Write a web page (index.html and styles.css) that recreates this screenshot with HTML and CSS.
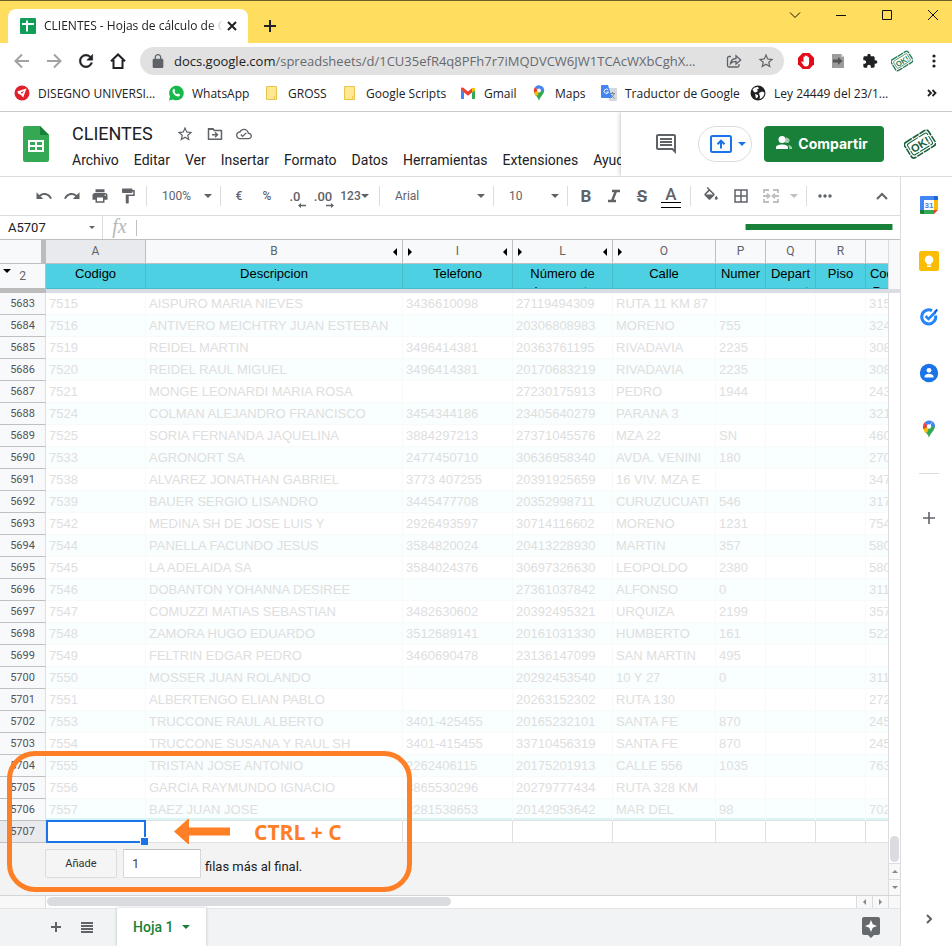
FILE: index.html
```html
<!DOCTYPE html>
<html lang="es">
<head>
<meta charset="utf-8">
<meta name="viewport" content="width=device-width, initial-scale=1">
<title>CLIENTES - Hojas de cálculo de Google</title>
<link rel="stylesheet" href="styles.css">
</head>
<body>
<header class="browser">
  <div class="tabstrip">
    <div class="tab">
      <svg class="i16" viewBox="0 0 16 16"><rect width="16" height="16" rx="1" fill="#0f9d58"/><path d="M2 6h12M7 2.500v11" stroke="#fff" stroke-width="2" fill="none"/></svg>
      <span class="tab-title">CLIENTES - Hojas de cálculo de Google</span>
      <button class="bare" aria-label="Cerrar pestaña"><svg width="10" height="10" viewBox="0 0 10 10"><path d="M1 1l8 8M9 1l-8 8" stroke="#202124" stroke-width="2"/></svg></button>
    </div>
    <button class="bare new-tab" aria-label="Nueva pestaña"><svg width="12" height="12" viewBox="0 0 12 12"><path d="M6 0v12M0 6h12" stroke="#202124" stroke-width="2"/></svg></button>
    <div class="window-controls">
      <button class="bare" aria-label="Buscar pestañas"><svg class="i16" viewBox="0 0 16 16"><path d="M3 5.500l5 5 5-5" stroke="#111" fill="none"/></svg></button>
      <button class="bare" aria-label="Minimizar"><svg class="i16" viewBox="0 0 16 16"><path d="M3 8.500h10" stroke="#111"/></svg></button>
      <button class="bare" aria-label="Maximizar"><svg class="i16" viewBox="0 0 16 16"><path d="M3.500 3.500h9v9h-9z" stroke="#111" fill="none"/></svg></button>
      <button class="bare" aria-label="Cerrar"><svg class="i16" viewBox="0 0 16 16"><path d="M3 3l10 10M13 3L3 13" stroke="#111"/></svg></button>
    </div>
  </div>
  <div class="navbar">
    <button class="bare nav-btn" aria-label="Atrás"><svg class="i16" viewBox="0 0 16 16"><path d="M15 8H2M8 1.500L1.500 8 8 14.500" stroke="#a0a2a4" stroke-width="2" fill="none"/></svg></button>
    <button class="bare nav-btn" aria-label="Adelante"><svg class="i16" viewBox="0 0 16 16"><path d="M1 8h13M8 1.500L14.500 8 8 14.500" stroke="#a0a2a4" stroke-width="2" fill="none"/></svg></button>
    <button class="bare nav-btn" aria-label="Recargar"><svg width="20" height="20" viewBox="0 0 24 24" fill="#202124" stroke="#202124" stroke-width=".6"><path d="M17.650 6.350C16.200 4.900 14.210 4 12 4c-4.420 0-7.990 3.580-7.990 8s3.570 8 7.990 8c3.730 0 6.840-2.550 7.730-6h-2.080c-.820 2.330-3.040 4-5.650 4-3.310 0-6-2.690-6-6s2.690-6 6-6c1.660 0 3.140.690 4.220 1.780L13 11h7V4l-2.350 2.350z"/></svg></button>
    <button class="bare nav-btn" aria-label="Inicio"><svg class="i16" viewBox="0 0 16 16"><path d="M1 8.300L8 1.500l7 6.800M3.500 7v8h9V7" stroke="#202124" stroke-width="2" fill="none"/></svg></button>
    <div class="omnibox">
      <svg class="lock" width="12" height="14" viewBox="4 1 16 21" fill="#5f6368"><path d="M18 8h-1V6c0-2.760-2.240-5-5-5S7 3.240 7 6v2H6c-1.100 0-2 .9-2 2v10c0 1.100.9 2 2 2h12c1.100 0 2-.9 2-2V10c0-1.100-.9-2-2-2zM9 6c0-1.660 1.340-3 3-3s3 1.340 3 3v2H9V6z"/></svg>
      <span class="url">docs.google.com<span class="path">/spreadsheets/d/1CU35efR4q8PFh7r7iMQDVCW6JW1TCAcWXbCghX...</span></span>
      <button class="bare" aria-label="Compartir página"><svg class="i16" viewBox="0 0 16 16" fill="none" stroke="#5f6368" stroke-width="1.300"><path d="M5 3.500H3a1.500 1.500 0 0 0-1.500 1.500v7.500A1.500 1.500 0 0 0 3 14h8.500a1.500 1.500 0 0 0 1.500-1.500V11"/><path d="M4.500 10.500C5 7 7 5.600 10 5.500V2.800L14.700 7 10 11V8.300c-2.500 0-4 .4-5.500 2.200z"/></svg></button>
      <button class="bare" aria-label="Marcador"><svg class="i18" viewBox="0 0 24 24" fill="#5f6368"><path d="M22 9.240l-7.190-.620L12 2 9.190 8.630 2 9.240l5.460 4.730L5.820 21 12 17.270 18.180 21l-1.630-7.030L22 9.240zM12 15.400l-3.760 2.270 1-4.280-3.320-2.880 4.380-.380L12 6.100l1.710 4.040 4.380.380-3.320 2.880 1 4.280L12 15.400z"/></svg></button>
    </div>
    <button class="bare nav-btn" aria-label="Bloqueador"><svg class="i16" viewBox="0 0 16 16"><path d="M4.700 0h6.600L16 4.700v6.600L11.300 16H4.700L0 11.300V4.700z" fill="#e30b17"/><path d="M4.200 8.500l1.300.8V4.200a.7.7 0 0 1 1.400 0v3V3.100a.7.7 0 0 1 1.400 0v4V3.500a.7.7 0 0 1 1.400 0v4V4.800a.7.7 0 0 1 1.400 0v5c0 2.200-1 3.700-3.100 3.700-1.500 0-2.500-.7-3.200-2.200L3.300 9.200c-.2-.6.4-1 .9-.7z" fill="#fff"/></svg></button>
    <button class="bare nav-btn" aria-label="Extensión"><svg width="12" height="14" viewBox="0 0 12 14"><path d="M0 0h9l3 3v11H0z" fill="#9c9c9c"/><path d="M9 0l3 3H9z" fill="#ccc"/><path d="M1 5.500h5V3l4.500 4L6 11V8.500H1z" fill="#555"/></svg></button>
    <button class="bare nav-btn" aria-label="Extensiones"><svg width="16" height="16" viewBox="0 0 24 24" fill="#202124"><path d="M20.500 11H19V7c0-1.100-.9-2-2-2h-4V3.500C13 2.120 11.880 1 10.500 1S8 2.120 8 3.500V5H4c-1.100 0-1.990.9-1.990 2v3.800H3.500c1.490 0 2.700 1.210 2.700 2.700s-1.210 2.700-2.700 2.700H2V20c0 1.100.9 2 2 2h3.800v-1.500c0-1.490 1.210-2.700 2.700-2.700s2.700 1.210 2.700 2.700V22H17c1.100 0 2-.9 2-2v-4h1.500c1.380 0 2.500-1.120 2.500-2.500S21.880 11 20.500 11z"/></svg></button>
    <button class="bare nav-btn" aria-label="Perfil"><svg width="22" height="22" viewBox="0 0 32 32"><g transform="rotate(-32 16 16)" fill="none" stroke="#2b7a55"><rect x="1.500" y="7" width="29" height="18" rx="3" stroke-width="2" stroke-dasharray="9 1"/><rect x="4.500" y="10" width="23" height="12" rx="2"/><text x="16" y="20.500" class="stamp" fill="#2b7a55" stroke="none">OK!</text></g></svg></button>
    <button class="bare nav-btn" aria-label="Menú"><svg class="i16" viewBox="0 0 16 16" fill="#202124"><circle cx="8" cy="3" r="1.600"/><circle cx="8" cy="8" r="1.600"/><circle cx="8" cy="13" r="1.600"/></svg></button>
  </div>
  <nav class="bookmarks">
    <a href="#"><svg class="i16" viewBox="0 0 16 16"><circle cx="8" cy="8" r="7.500" fill="#e0202c"/><path d="M12.500 3.500L9.200 12.500 7 10 4 8.500l-.5-2.300z" fill="#fff"/><path d="M6.800 7.600l3.200-1.700-2 3z" fill="#e0202c"/></svg>DISEGNO UNIVERSI...</a>
    <a href="#"><svg class="i16" viewBox="0 0 16 16"><path d="M1 15.500l1-4A7.300 7.300 0 1 1 5 14.500z" fill="#16b94b"/><path d="M5.300 4.200c.5-.5 1-.4 1.200.1l.6 1.300c.2.500-.6 1-.5 1.300.5 1.100 1.300 1.900 2.500 2.400.4.100.8-.9 1.200-.7l1.400.7c.5.300.2 1.200-.2 1.600-1.300 1.100-3.500.4-5-1.100-1.500-1.400-2.700-3.900-1.200-5.600z" fill="#fff"/></svg>WhatsApp</a>
    <a href="#"><svg class="i16" viewBox="0 0 16 16"><path d="M2.500 1.500h10v13h-10z" fill="#ffe794" stroke="#e8c54a"/><path d="M10.500 14.500v-3l2-1v4z" fill="#ffefb4" stroke="#e8c54a"/></svg>GROSS</a>
    <a href="#"><svg class="i16" viewBox="0 0 16 16"><path d="M2.500 1.500h10v13h-10z" fill="#ffe794" stroke="#e8c54a"/><path d="M10.500 14.500v-3l2-1v4z" fill="#ffefb4" stroke="#e8c54a"/></svg>Google Scripts</a>
    <a href="#"><svg class="i16" viewBox="0 0 16 16"><path d="M1 14V5l3 2v7z" fill="#4285f4"/><path d="M15 14V5l-3 2v7z" fill="#34a853"/><path d="M1 5V4c0-1.500 1.600-1.800 2.600-1L8 6.500 12 3.300V7.600L8 10.700 4 7.500z" fill="#ea4335"/><path d="M12 3.300c1-1 3-.8 3 .8V5.300l-3 2.300z" fill="#fbbc04"/></svg>Gmail</a>
    <a href="#"><svg class="i16" viewBox="0 0 16 16"><path d="M8 16C7.500 12 2.800 9.700 2.800 5.400L13.200 5c0 4.700-4.700 7-5.200 11z" fill="#34a853"/><path d="M3 6.500L8 5l-1 5-2.500 1C3.800 9.500 3.200 8 3 6.500z" fill="#fbbc04"/><path d="M4 2L8 5.500 3.200 7.500C2.500 5.500 2.800 3.500 4 2z" fill="#ea4335"/><path d="M4 2a5.300 5.300 0 0 1 9.200 3.500L9 6.500z" fill="#4285f4"/><circle cx="8" cy="5.500" r="1.900" fill="#fff"/></svg>Maps</a>
    <a href="#"><svg class="i16" viewBox="0 0 16 16"><path d="M6 3h9a1 1 0 0 1 1 1v11a1 1 0 0 1-1 1H8z" fill="#d5d8dc"/><path d="M9 8.500h5M11.500 7v1.500M13 8.500c-.5 2-2 3.500-3.500 4.500M10 10l3.500 3.500" stroke="#7a8a95" fill="none"/><path d="M1 0h6l4 13H1a1 1 0 0 1-1-1V1a1 1 0 0 1 1-1z" fill="#4285f4"/><path d="M7.200 5A2.200 2.200 0 1 0 7.500 7H5.500" stroke="#fff" fill="none"/></svg>Traductor de Google</a>
    <a href="#"><svg class="i16" viewBox="0 0 16 16"><circle cx="8" cy="8" r="7.500" fill="#202124"/><path d="M2.500 4.500C4 2.500 6 1.800 8 2l1 1.500-2 1L8 6 5.500 7.500 4 7zM9 8l3-1.500 2.300 1c.2 3-2 6-4.800 6.400L10 12z" fill="#fff"/><path d="M5 9l3 1v2l-2 1.500" fill="#fff"/></svg>Ley 24449 del 23/1...</a>
    <button class="bare more" aria-label="Más marcadores"><svg width="10" height="8" viewBox="0 0 10 8"><path d="M1 1l3 3-3 3M5.500 1l3 3-3 3" stroke="#202124" stroke-width="1.800" fill="none"/></svg></button>
  </nav>
</header>

<section class="doc-head">
  <div class="doc-left">
    <svg class="logo" width="26" height="36" viewBox="0 0 26 36"><path d="M2 0h15l9 9v25a2 2 0 0 1-2 2H2a2 2 0 0 1-2-2V2a2 2 0 0 1 2-2z" fill="#34a853"/><path d="M17 0l9 9h-9z" fill="#188038"/><path d="M5 14h16v12H5zm2 2v3h5v-3zm7 0v3h5v-3zm-7 5v3h5v-3zm7 0v3h5v-3z" fill="#fff" fill-rule="evenodd"/></svg>
    <div class="doc-info">
      <div class="title-row">
        <input class="doc-title" aria-label="Nombre del documento" value="CLIENTES">
        <button class="bare" aria-label="Destacar"><svg class="i18" viewBox="0 0 24 24" fill="#5f6368"><path d="M22 9.240l-7.190-.620L12 2 9.190 8.630 2 9.240l5.460 4.730L5.820 21 12 17.270 18.180 21l-1.630-7.030L22 9.240zM12 15.400l-3.760 2.270 1-4.280-3.320-2.880 4.380-.380L12 6.100l1.710 4.040 4.380.380-3.320 2.880 1 4.280L12 15.400z"/></svg></button>
        <button class="bare" aria-label="Mover"><svg class="i16" viewBox="0 0 16 16"><path d="M1.500 2.800h4.300l1.500 1.700h7.200v8.700h-13z" stroke="#5f6368" stroke-width="1.500" fill="none" stroke-linejoin="round"/><path d="M1 2h5l1.500 2H1z" fill="#5f6368"/><path d="M5 8.800h5M8 6.300l2.500 2.500L8 11.300" stroke="#5f6368" stroke-width="1.400" fill="none"/></svg></button>
        <button class="bare" aria-label="Guardado"><svg class="i16" viewBox="0 0 24 24" fill="#5f6368"><path d="M19.350 10.040C18.670 6.590 15.640 4 12 4 9.110 4 6.600 5.640 5.350 8.040 2.340 8.360 0 10.910 0 14c0 3.310 2.690 6 6 6h13c2.760 0 5-2.240 5-5 0-2.640-2.050-4.780-4.650-4.960zM19 18H6c-2.210 0-4-1.790-4-4 0-2.050 1.530-3.760 3.560-3.970l1.070-.110.5-.950C8.080 7.140 9.940 6 12 6c2.620 0 4.880 1.860 5.390 4.430l.3 1.500 1.530.110c1.560.1 2.780 1.410 2.780 2.960 0 1.650-1.350 3-3 3zm-9-3.820l-2.090-2.090L6.500 13.500 10 17l6.010-6.010-1.410-1.410z"/></svg></button>
      </div>
      <nav class="menus">
        <button class="bare">Archivo</button><button class="bare">Editar</button><button class="bare">Ver</button><button class="bare">Insertar</button><button class="bare">Formato</button><button class="bare">Datos</button><button class="bare">Herramientas</button><button class="bare">Extensiones</button><button class="bare">Ayuda</button>
      </nav>
    </div>
  </div>
  <div class="doc-right">
    <button class="bare" aria-label="Comentarios"><svg class="i24" viewBox="0 0 24 24" fill="#5f6368"><path d="M21.990 4c0-1.100-.890-2-1.990-2H4c-1.100 0-2 .9-2 2v12c0 1.100.9 2 2 2h14l4 4-.010-18zM20 4v13.170L18.830 16H4V4h16zM6 12h12v2H6zm0-3h12v2H6zm0-3h12v2H6z"/></svg></button>
    <button class="present" aria-label="Presentar"><svg width="22" height="18" viewBox="0 0 22 18"><rect x="1" y="1" width="20" height="16" rx="1.500" stroke="#1a73e8" stroke-width="2" fill="none"/><path d="M11 13.500V6M7.500 9.200L11 5.700l3.500 3.500" stroke="#1a73e8" stroke-width="2" fill="none"/></svg><i class="caret blue"></i></button>
    <button class="share"><svg width="16" height="14" viewBox="0 0 16 14" fill="#fff"><circle cx="6" cy="3.500" r="3.500"/><path d="M0 13v-1.500C0 9.200 3.500 8.500 6 8.500s6 .7 6 3V13z"/><g opacity=".6"><path d="M9.500.6a3.400 3.400 0 0 1 0 5.900c1-2 1-4 0-5.900z"/><circle cx="11" cy="4.500" r="2.500"/><path d="M12 9c2 .3 4 1.200 4 2.700V13h-2.800v-1.700c0-1-.5-1.800-1.200-2.300z"/></g></svg>Compartir</button>
    <button class="bare avatar" aria-label="Cuenta"><svg width="32" height="32" viewBox="0 0 32 32"><g transform="rotate(-32 16 16)" fill="none" stroke="#17603b"><rect x="2" y="7" width="28" height="18" rx="3" stroke-width="1.600" stroke-dasharray="7 1"/><rect x="4.500" y="9.500" width="23" height="13" rx="2" stroke-dasharray="11 1"/><text x="16" y="20.500" class="stamp" fill="#17603b" stroke="none">OK!</text></g></svg></button>
  </div>
</section>

<main class="app">
  <div class="work">
    <div class="tools">
      <button class="bare tb" aria-label="Deshacer"><svg class="i18" viewBox="0 0 24 24"><path d="M12.500 8c-2.650 0-5.050.990-6.900 2.600L2 7v9h9l-3.620-3.620c1.390-1.160 3.160-1.880 5.120-1.880 3.540 0 6.550 2.310 7.600 5.500l2.370-.780C21.080 11.030 17.150 8 12.500 8z"/></svg></button>
      <button class="bare tb" aria-label="Rehacer"><svg class="i18" viewBox="0 0 24 24"><path d="M18.400 10.600C16.550 8.990 14.150 8 11.500 8c-4.650 0-8.580 3.030-9.960 7.220L3.900 16c1.050-3.190 4.050-5.500 7.600-5.500 1.950 0 3.730.720 5.120 1.880L13 16h9V7l-3.600 3.600z"/></svg></button>
      <button class="bare tb" aria-label="Imprimir"><svg class="i18" viewBox="0 0 24 24"><path d="M19 8H5c-1.660 0-3 1.340-3 3v6h4v4h12v-4h4v-6c0-1.660-1.340-3-3-3zm-3 11H8v-5h8v5zm3-7c-.550 0-1-.450-1-1s.450-1 1-1 1 .450 1 1-.450 1-1 1zm-1-9H6v4h12V3z"/></svg></button>
      <button class="bare tb" aria-label="Copiar formato"><svg class="i18" viewBox="0 0 24 24"><path d="M18 4V3c0-.550-.450-1-1-1H5c-.550 0-1 .450-1 1v4c0 .550.450 1 1 1h12c.550 0 1-.450 1-1V6h1v4H9v11c0 .550.450 1 1 1h2c.550 0 1-.450 1-1v-9h8V4h-3z"/></svg></button>
      <i class="sep"></i>
      <span class="pick"><select aria-label="Zoom"><option>100%</option></select><i class="caret"></i></span>
      <i class="sep"></i>
      <button class="bare tb">€</button>
      <button class="bare tb">%</button>
      <button class="bare tb dec" aria-label="Menos decimales">.0<svg width="8" height="5" viewBox="0 0 8 5"><path d="M3 0v1.700h5v1.600H3V5L0 2.500z"/></svg></button>
      <button class="bare tb dec" aria-label="Más decimales">.00<svg width="8" height="5" viewBox="0 0 8 5"><path d="M5 0v1.700H0v1.600h5V5l3-2.500z"/></svg></button>
      <button class="bare tb fmt">123<i class="caret"></i></button>
      <i class="sep"></i>
      <span class="pick font"><select aria-label="Fuente"><option>Arial</option></select><i class="caret"></i></span>
      <i class="sep"></i>
      <span class="pick"><select aria-label="Tamaño"><option>10</option></select><i class="caret"></i></span>
      <i class="sep"></i>
      <button class="bare tb letter">B</button>
      <button class="bare tb" aria-label="Cursiva"><svg width="14" height="14" viewBox="0 0 14 14"><path d="M5 2h8M1 12h8M9 2L5 12" stroke="#5f6368" stroke-width="2.400"/></svg></button>
      <button class="bare tb letter strike">S</button>
      <button class="bare tb letter color">A</button>
      <i class="sep"></i>
      <button class="bare tb fill" aria-label="Color de relleno"><svg class="i18" viewBox="0 0 24 24"><path d="M16.560 8.940L7.620 0 6.210 1.410l2.380 2.380-5.150 5.150c-.590.590-.590 1.540 0 2.120l5.500 5.500c.290.290.680.440 1.060.440s.770-.150 1.060-.440l5.500-5.500c.590-.580.590-1.530 0-2.120zM5.210 10L10 5.210 14.790 10H5.210zM19 11.500s-2 2.170-2 3.500c0 1.100.9 2 2 2s2-.9 2-2c0-1.330-2-3.500-2-3.500z"/></svg></button>
      <button class="bare tb" aria-label="Bordes"><svg class="i18" viewBox="0 0 24 24"><path d="M3 3v18h18V3H3zm8 16H5v-6h6v6zm0-8H5V5h6v6zm8 8h-6v-6h6v6zm0-8h-6V5h6v6z"/></svg></button>
      <button class="bare tb merge" disabled aria-label="Combinar celdas"><svg width="16" height="14" viewBox="0 0 16 14"><path d="M1 4V1h5M10 1h5v3M1 10v3h5M10 13h5v-3M0 7h6M16 7h-6M4 4.700L6.500 7 4 9.300M12 4.700L9.500 7l2.500 2.300" stroke="#bdbfc1" stroke-width="1.800" fill="none"/></svg><i class="caret"></i></button>
      <i class="sep"></i>
      <button class="bare tb" aria-label="Más"><svg width="14" height="4" viewBox="0 0 14 4"><circle cx="2" cy="2" r="1.700"/><circle cx="7" cy="2" r="1.700"/><circle cx="12" cy="2" r="1.700"/></svg></button>
      <button class="bare tb hide" aria-label="Ocultar menús"><svg width="12" height="8" viewBox="0 0 12 8"><path d="M1 7l5-5 5 5" stroke="#5f6368" stroke-width="2" fill="none"/></svg></button>
    </div>
    <div class="formula">
      <input class="name-box" aria-label="Cuadro de nombres" value="A5707"><i class="caret small"></i>
      <span class="fx">fx</span>
      <input class="formula-input" aria-label="Fórmula">
      <span class="progress"></span>
    </div>

    <div class="sheet">
      <div class="grid">
        <table>
          <colgroup><col class="c-n"><col class="c-a"><col class="c-b"><col class="c-i"><col class="c-a"><col class="c-o"><col class="c-p"><col class="c-p"><col class="c-p"><col></colgroup>
          <thead>
            <tr class="letters"><th class="corner"></th><th class="on">A</th><th>B<i class="t-l"></i></th><th><i class="t-r"></i>I<i class="t-l"></i></th><th><i class="t-r"></i>L<i class="t-l"></i></th><th><i class="t-r"></i>O</th><th>P</th><th>Q</th><th>R</th><th></th></tr>
            <tr class="names"><th class="n"><i class="t-d"></i>2</th><th><div>Codigo</div></th><th><div>Descripcion</div></th><th><div>Telefono</div></th><th><div>Número de documento</div></th><th><div>Calle</div></th><th><div>Numer<br>o</div></th><th><div>Depart<br>ament<br>o</div></th><th><div>Piso</div></th><th><div>Codigo Postal</div></th></tr>
            <tr class="freeze"><th></th><td colspan="9"></td></tr>
          </thead>
          <tbody>
            <tr><th>5683</th><td>7515</td><td>AISPURO MARIA NIEVES</td><td>3436610098</td><td>27119494309</td><td>RUTA 11 KM 87</td><td></td><td></td><td></td><td>315</td></tr>
            <tr><th>5684</th><td>7516</td><td>ANTIVERO MEICHTRY JUAN ESTEBAN</td><td></td><td>20306808983</td><td>MORENO</td><td>755</td><td></td><td></td><td>324</td></tr>
            <tr><th>5685</th><td>7519</td><td>REIDEL MARTIN</td><td>3496414381</td><td>20363761195</td><td>RIVADAVIA</td><td>2235</td><td></td><td></td><td>308</td></tr>
            <tr><th>5686</th><td>7520</td><td>REIDEL RAUL MIGUEL</td><td>3496414381</td><td>20170683219</td><td>RIVADAVIA</td><td>2235</td><td></td><td></td><td>308</td></tr>
            <tr><th>5687</th><td>7521</td><td>MONGE LEONARDI MARIA ROSA</td><td></td><td>27230175913</td><td>PEDRO</td><td>1944</td><td></td><td></td><td>243</td></tr>
            <tr><th>5688</th><td>7524</td><td>COLMAN ALEJANDRO FRANCISCO</td><td>3454344186</td><td>23405640279</td><td>PARANA 3</td><td></td><td></td><td></td><td>321</td></tr>
            <tr><th>5689</th><td>7525</td><td>SORIA FERNANDA JAQUELINA</td><td>3884297213</td><td>27371045576</td><td>MZA 22</td><td>SN</td><td></td><td></td><td>460</td></tr>
            <tr><th>5690</th><td>7533</td><td>AGRONORT SA</td><td>2477450710</td><td>30636958340</td><td>AVDA. VENINI</td><td>180</td><td></td><td></td><td>270</td></tr>
            <tr><th>5691</th><td>7538</td><td>ALVAREZ JONATHAN GABRIEL</td><td>3773 407255</td><td>20391925659</td><td>16 VIV. MZA E</td><td></td><td></td><td></td><td>347</td></tr>
            <tr><th>5692</th><td>7539</td><td>BAUER SERGIO LISANDRO</td><td>3445477708</td><td>20352998711</td><td>CURUZUCUATI</td><td>546</td><td></td><td></td><td>317</td></tr>
            <tr><th>5693</th><td>7542</td><td>MEDINA SH DE JOSE LUIS Y</td><td>2926493597</td><td>30714116602</td><td>MORENO</td><td>1231</td><td></td><td></td><td>754</td></tr>
            <tr><th>5694</th><td>7544</td><td>PANELLA FACUNDO JESUS</td><td>3584820024</td><td>20413228930</td><td>MARTIN</td><td>357</td><td></td><td></td><td>580</td></tr>
            <tr><th>5695</th><td>7545</td><td>LA ADELAIDA SA</td><td>3584024376</td><td>30697326630</td><td>LEOPOLDO</td><td>2380</td><td></td><td></td><td>580</td></tr>
            <tr><th>5696</th><td>7546</td><td>DOBANTON YOHANNA DESIREE</td><td></td><td>27361037842</td><td>ALFONSO</td><td>0</td><td></td><td></td><td>311</td></tr>
            <tr><th>5697</th><td>7547</td><td>COMUZZI MATIAS SEBASTIAN</td><td>3482630602</td><td>20392495321</td><td>URQUIZA</td><td>2199</td><td></td><td></td><td>357</td></tr>
            <tr><th>5698</th><td>7548</td><td>ZAMORA HUGO EDUARDO</td><td>3512689141</td><td>20161031330</td><td>HUMBERTO</td><td>161</td><td></td><td></td><td>522</td></tr>
            <tr><th>5699</th><td>7549</td><td>FELTRIN EDGAR PEDRO</td><td>3460690478</td><td>23136147099</td><td>SAN MARTIN</td><td>495</td><td></td><td></td><td></td></tr>
            <tr><th>5700</th><td>7550</td><td>MOSSER JUAN ROLANDO</td><td></td><td>20292453540</td><td>10 Y 27</td><td>0</td><td></td><td></td><td>311</td></tr>
            <tr><th>5701</th><td>7551</td><td>ALBERTENGO ELIAN PABLO</td><td></td><td>20263152302</td><td>RUTA 130</td><td></td><td></td><td></td><td>272</td></tr>
            <tr><th>5702</th><td>7553</td><td>TRUCCONE RAUL ALBERTO</td><td>3401-425455</td><td>20165232101</td><td>SANTA FE</td><td>870</td><td></td><td></td><td>245</td></tr>
            <tr><th>5703</th><td>7554</td><td>TRUCCONE SUSANA Y RAUL SH</td><td>3401-415455</td><td>33710456319</td><td>SANTA FE</td><td>870</td><td></td><td></td><td>245</td></tr>
            <tr><th>5704</th><td>7555</td><td>TRISTAN JOSE ANTONIO</td><td>2262406115</td><td>20175201913</td><td>CALLE 556</td><td>1035</td><td></td><td></td><td>763</td></tr>
            <tr><th>5705</th><td>7556</td><td>GARCIA RAYMUNDO IGNACIO</td><td>3865530296</td><td>20279777434</td><td>RUTA 328 KM</td><td></td><td></td><td></td><td></td></tr>
            <tr class="last"><th>5706</th><td>7557</td><td>BAEZ JUAN JOSE</td><td>2281538653</td><td>20142953642</td><td>MAR DEL</td><td>98</td><td></td><td></td><td>702</td></tr>
            <tr class="empty"><th>5707</th><td class="active"></td><td></td><td></td><td></td><td></td><td></td><td></td><td></td><td></td></tr>
          </tbody>
        </table>
        <div class="add-rows">
          <button class="add">Añade</button>
          <input id="rows" value="1">
          <label for="rows">filas más al final.</label>
        </div>
      </div>
      <div class="vscroll">
        <div class="v-head"></div>
        <div class="v-thumb"></div>
        <div class="arrow"><i class="up"></i></div>
        <div class="arrow"><i class="down"></i></div>
      </div>
      <div class="callout">
        <svg width="56" height="25" viewBox="0 0 56 25"><path d="M0 12.500L14 0h1v8.500h41v8H15V25h-1z" fill="#ff7f27"/></svg>
        <span>CTRL + C</span>
      </div>
    </div>
    <div class="hscroll">
      <div class="h-stub"></div>
      <div class="h-track"><div class="h-thumb"></div></div>
      <div class="h-arrow"><i class="left"></i></div>
      <div class="h-arrow"><i class="right"></i></div>
      <div class="h-corner"></div>
    </div>
    <footer class="tabs">
      <button class="bare" aria-label="Añadir hoja"><svg width="10" height="10" viewBox="0 0 10 10"><path d="M5 0v10M0 5h10" stroke="#5f6368" stroke-width="2"/></svg></button>
      <button class="bare" aria-label="Todas las hojas"><svg width="12" height="11" viewBox="0 0 12 11"><path d="M0 1h12M0 4h12M0 7h12M0 10h12" stroke="#5f6368" stroke-width="2"/></svg></button>
      <button class="sheet-tab">Hoja 1<i class="caret green"></i></button>
      <button class="bare explore" aria-label="Explorar"><svg width="18" height="21" viewBox="0 0 18 21"><path d="M2 0h14a2 2 0 0 1 2 2v14a2 2 0 0 1-2 2h-4l-3 3-3-3H2a2 2 0 0 1-2-2V2a2 2 0 0 1 2-2z" fill="#666a6d"/><path d="M9 3l1.700 4.300L15 9l-4.300 1.700L9 15l-1.700-4.300L3 9l4.300-1.700z" fill="#fff"/></svg></button>
    </footer>
  </div>

  <aside class="side">
    <button class="bare" aria-label="Calendario"><svg width="20" height="20" viewBox="0 0 20 20"><path d="M1 2a1 1 0 0 1 1-1h13v4H5v10H1z" fill="#4285f4"/><path d="M15 1h3a1 1 0 0 1 1 1v3h-4z" fill="#1967d2"/><path d="M15 5h4v10h-4z" fill="#fbbc04"/><path d="M5 15h10v4H5z" fill="#34a853"/><path d="M1 15h4v4H2a1 1 0 0 1-1-1z" fill="#188038"/><path d="M15 15h4l-4 4z" fill="#ea4335"/><path d="M5 5h10v10H5z" fill="#fff"/><text x="10" y="13" class="cal" fill="#4285f4">31</text></svg></button>
    <button class="bare" aria-label="Keep"><svg width="20" height="20" viewBox="0 0 20 20"><rect width="20" height="20" rx="2" fill="#fbbc04"/><circle cx="10" cy="8.800" r="4.300" fill="#fff"/><path d="M8 11h4v2.500H8zM8 14.500h4V16H8z" fill="#fff"/></svg></button>
    <button class="bare" aria-label="Tasks"><svg width="20" height="20" viewBox="0 0 20 20"><path d="M16.600 8.500A7 7 0 1 1 13 3.700" fill="none" stroke="#2684fc" stroke-width="3"/><path d="M6.500 9l3 3L16.500 5" fill="none" stroke="#2684fc" stroke-width="2.600"/><path d="M14.800 4.700L17.500 1.800 19 3.300l-2.500 3z" fill="#0a5fdc"/></svg></button>
    <button class="bare" aria-label="Contactos"><svg width="20" height="20" viewBox="0 0 20 20"><circle cx="10" cy="10" r="9.200" fill="#1a73e8"/><circle cx="10" cy="7.300" r="2.400" fill="#fff"/><path d="M5.500 14.500v-1c0-1.800 2.600-2.700 4.500-2.700s4.500.9 4.500 2.700v1z" fill="#fff"/></svg></button>
    <button class="bare" aria-label="Maps"><svg width="20" height="20" viewBox="0 0 20 20"><path d="M10 19C9.500 14.500 4 12.500 4 7.500L16 7c0 5-5.500 7.500-6 12z" fill="#34a853"/><path d="M4.300 9.500L10 7.500 8.500 13l-2 1.200C5.500 12.700 4.700 11 4.300 9.500z" fill="#fbbc04"/><path d="M5.500 3.500L10 7.500 4.300 10C3.700 7.500 4 5 5.500 3.500z" fill="#ea4335"/><path d="M5.500 3.500A6 6 0 0 1 13.500 2.500L9.500 7.500z" fill="#4285f4"/><path d="M13.500 2.500A6 6 0 0 1 16 8l-5-1z" fill="#4285f4"/><circle cx="10" cy="7.500" r="2.200" fill="#fff"/></svg></button>
    <hr>
    <button class="bare" aria-label="Complementos"><svg width="12" height="12" viewBox="0 0 12 12"><path d="M6 0v12M0 6h12" stroke="#5f6368" stroke-width="1.600"/></svg></button>
    <button class="bare side-hide" aria-label="Ocultar panel"><svg width="7" height="10" viewBox="0 0 7 10"><path d="M1 1l4 4-4 4" stroke="#5f6368" stroke-width="2" fill="none"/></svg></button>
  </aside>
</main>
</body>
</html>
```
FILE: styles.css
```css
* { box-sizing: border-box; }

body {
  margin: 0;
  min-height: 100vh;
  display: flex;
  flex-direction: column;
  overflow-x: hidden;
  background: #fff;
  color: #202124;
  font-family: Roboto, "Liberation Sans", sans-serif;
}

svg { display: block; flex: none; }
input, select, button { font: inherit; color: inherit; }
i { font-style: normal; }
.i16 { width: 16px; height: 16px; }
.i18 { width: 18px; height: 18px; }
.i24 { width: 24px; height: 24px; }

.bare {
  display: flex;
  align-items: center;
  justify-content: center;
  flex: none;
  padding: 0;
  border: 0;
  background: none;
}

.caret {
  flex: none;
  border: 4px solid transparent;
  border-top-color: #5f6368;
  border-bottom: 0;
}
.caret.small { border-width: 3px 3px 0; }
.caret.blue { border-top-color: #1a73e8; }
.caret.green { border-top-color: #188038; }

.stamp {
  font: bold 11px "Liberation Sans", sans-serif;
  text-anchor: middle;
}
.cal {
  font: bold 8px "Liberation Sans", sans-serif;
  text-anchor: middle;
}

/* Browser window */
.browser {
  font-family: "Open Sans", "Noto Sans", sans-serif;
  font-size: 12px;
  border-bottom: 1px solid #c8c9cb;
}
.tabstrip {
  display: flex;
  height: 43px;
  padding-left: 8px;
  background: #ffdd5f;
  border-top: 1px solid #6e5f2a;
}
.tab {
  display: flex;
  align-items: center;
  width: 240px;
  margin-top: 8px;
  padding: 0 11px 0 12px;
  background: #fff;
  border-radius: 8px 8px 0 0;
}
.tab-title {
  flex: 1;
  margin: 0 4px 2px 8px;
  overflow: hidden;
  white-space: nowrap;
  -webkit-mask-image: linear-gradient(to right, #000 92%, transparent);
  mask-image: linear-gradient(to right, #000 92%, transparent);
}
.new-tab { margin: 8px 0 0 16px; }
.window-controls {
  display: flex;
  gap: 30px;
  height: 28px;
  margin-left: auto;
  padding-right: 11px;
}
.navbar {
  display: flex;
  align-items: center;
  height: 36px;
  padding: 0 2px 0 6px;
}
.nav-btn { width: 32px; height: 32px; }
.omnibox {
  display: flex;
  align-items: center;
  flex: 1;
  min-width: 0;
  height: 28px;
  margin: 0 6px;
  padding: 0 9px 0 12px;
  border-radius: 14px;
  background: #e1e1e1;
  font-size: 13px;
}
.omnibox .bare { margin-left: 15px; }
.url {
  flex: 1;
  margin-left: 10px;
  overflow: hidden;
  white-space: nowrap;
}
.path { color: #666a6e; }
.bookmarks {
  display: grid;
  grid-template-columns: 154px 96px 78px 118px 71px 70px 149px 1fr auto;
  align-items: center;
  height: 32px;
  padding: 0 15px 4px 14px;
}
.bookmarks a {
  display: flex;
  align-items: center;
  gap: 8px;
  color: inherit;
  text-decoration: none;
  white-space: nowrap;
}

/* Document header */
.doc-head {
  display: flex;
  height: 65px;
  border-bottom: 1px solid #dadce0;
}
.doc-left {
  display: flex;
  flex: 1;
  min-width: 0;
  overflow: hidden;
  padding-left: 23px;
}
.logo { margin-top: 14px; }
.doc-info { margin: 12px 0 0 23px; }
.title-row {
  display: flex;
  align-items: center;
  gap: 13px;
  height: 20px;
}
.doc-title {
  width: 91px;
  padding: 0 0 2px;
  border: 0;
  background: none;
  font-size: 18px;
}
.menus {
  display: flex;
  gap: 15px;
  margin-top: 7px;
  font-size: 14px;
  line-height: 18px;
  white-space: nowrap;
}
.doc-right {
  display: flex;
  align-items: center;
  flex: none;
  padding: 0 16px 0 33px;
  background: #fff;
  box-shadow: 0 0 5px rgba(60, 64, 67, .4);
  clip-path: inset(0 0 0 -8px);
}
.present {
  display: flex;
  align-items: center;
  justify-content: center;
  gap: 6px;
  width: 54px;
  height: 36px;
  margin: 0 12px 0 20px;
  padding: 0 0 0 5px;
  border: 1px solid #dadce0;
  border-radius: 18px;
  background: #fff;
}
.share {
  display: flex;
  align-items: center;
  justify-content: center;
  gap: 6px;
  width: 120px;
  height: 36px;
  padding: 0 4px 2px 0;
  border: 0;
  border-radius: 4px;
  background: #188038;
  color: #fff;
  font: 700 14px Inter, Roboto, sans-serif;
}
.avatar { margin-left: 20px; }

/* Application */
.app { display: flex; flex: 1; }
.work {
  display: flex;
  flex-direction: column;
  flex: 1;
  min-width: 0;
}
.tools {
  display: flex;
  align-items: center;
  height: 39px;
  padding: 0 4px 0 30px;
  border-bottom: 1px solid #dadce0;
  color: #5f6368;
  font-size: 12px;
}
.tb { width: 28px; height: 28px; font-weight: 500; }
.tb svg { fill: #5f6368; }
.sep {
  flex: none;
  width: 1px;
  height: 20px;
  margin: 0 4px;
  background: #dadce0;
}
.pick {
  display: flex;
  align-items: center;
  flex: none;
  width: 65px;
  padding: 0 4px 0 11px;
}
.pick.font { width: 105px; }
.pick select {
  flex: 1;
  min-width: 0;
  padding: 0;
  border: 0;
  background: none;
  appearance: none;
}
.dec { position: relative; font-size: 13px; }
.dec svg { position: absolute; right: 3px; bottom: 2px; }
.fmt { width: 38px; padding-right: 3px; }
.letter { font-size: 17px; font-weight: 700; }
.strike { text-decoration: line-through; }
.color {
  width: 30px;
  position: relative;
  font-weight: 500;
  line-height: 20px;
  padding-bottom: 4px;
}
.color::after {
  content: "";
  position: absolute;
  inset: auto 5px 2px;
  height: 4px;
  border: 1px solid #000;
  border-width: 1px 0;
}
.fill { width: 32px; }
.merge { width: 47px; gap: 11px; padding-left: 4px; }
.merge .caret { border-top-color: #bdbfc1; }
.hide { margin-left: auto; }

.formula {
  display: flex;
  align-items: center;
  height: 24px;
  padding-right: 7px;
  border-bottom: 1px solid #c0c0c0;
}
.name-box {
  width: 89px;
  padding: 0 0 0 8px;
  border: 0;
  background: none;
  font-size: 13px;
}
.fx {
  align-self: stretch;
  width: 34px;
  margin-left: 7px;
  border-left: 1px solid #dadce0;
  color: #b6b8ba;
  font: italic 20px/20px "Liberation Serif", serif;
  text-align: center;
}
.formula-input {
  flex: 1;
  min-width: 0;
  height: 16px;
  padding: 0;
  border: 0;
  border-left: 1px solid #c0c0c0;
}
.progress {
  width: 148px;
  height: 6px;
  margin-bottom: 2px;
  background: #188038;
  border: 1px solid #8cc99d;
  border-width: 0 1px;
}

/* Spreadsheet */
.sheet { position: relative; display: flex; flex: 1; }
.grid {
  display: flex;
  flex-direction: column;
  flex: 1;
  min-width: 0;
  overflow: hidden;
}
table {
  width: 100%;
  min-width: 916px;
  table-layout: fixed;
  border-spacing: 0;
  font-family: "Liberation Sans", sans-serif;
  font-size: 13px;
}
.c-n { width: 46px; }
.c-a { width: 100px; }
.c-b { width: 257px; }
.c-i { width: 110px; }
.c-o { width: 103px; }
.c-p { width: 50px; }
th, td { position: relative; padding: 0; white-space: nowrap; font-weight: 400; }

.letters th {
  height: 24px;
  background: #f8f9fa;
  border: 1px solid #c0c0c0;
  border-width: 0 1px 1px 0;
  color: #5f6368;
  font: 12px/23px Roboto, sans-serif;
}
.letters .on { background: #e8eaed; }
.letters .corner { border-right: 5px solid #bcbcbc; }
.names th {
  height: 25px;
  background: #4dd0e1;
  border: 1px solid #46bccb;
  border-width: 0 1px 1px 0;
  color: #000;
}
.names div {
  height: 24px;
  padding-top: 1px;
  overflow: hidden;
  line-height: 18px;
  white-space: normal;
}
.names .n {
  background: #f8f9fa;
  border-color: #bcbcbc;
  color: #5f6368;
  font: 12px/22px Roboto, sans-serif;
}
.freeze th { height: 4px; background: #bcbcbc; }
.freeze td { height: 4px; background: #dadce4; }

.t-l, .t-r, .t-d, .up, .down, .left, .right { border: 4px solid transparent; }
.t-l, .t-r, .t-d { position: absolute; top: 8px; }
.t-l { right: 5px; border-right-color: #000; border-left: 0; }
.t-r { left: 5px; border-left-color: #000; border-right: 0; }
.t-d { top: 5px; left: 3px; border-top-color: #000; border-bottom: 0; }

tbody th {
  height: 22px;
  background: #f8f9fa;
  border: 1px solid #c0c0c0;
  border-width: 0 1px 1px 0;
  border-right-color: #e0e0e0;
  color: #50545a;
  font: 400 11px/21px Roboto, sans-serif;
}
tbody td {
  padding-left: 3px;
  border: 1px solid #f8fafa;
  border-width: 0 1px 1px 0;
  color: #dedede;
}
tbody tr:nth-child(even) td { background: #f9feff; }
tbody .last td {
  border-bottom-color: #e0e0e0;
  box-shadow: inset 0 -2px #dbf5f6;
}
tbody .empty td { background: #fff; border-color: #e0e0e0; }
tbody .empty th { background: #e8eaed; }
.active::before {
  content: "";
  position: absolute;
  inset: -1px -1px -1px 0;
  border: 2px solid #1a73e8;
}
.active::after {
  content: "";
  position: absolute;
  right: -3px;
  bottom: -3px;
  z-index: 1;
  width: 7px;
  height: 7px;
  background: #1a73e8;
  border: 1px solid #fff;
  border-width: 1px 0 0 1px;
}
.add-rows {
  display: flex;
  align-items: flex-start;
  flex: 1;
  min-height: 52px;
  padding: 6px 0 0 45px;
  background: #f3f3f3;
  font-size: 13px;
}
.add {
  width: 72px;
  height: 29px;
  padding: 0;
  border: 1px solid #dcdcdc;
  border-radius: 2px;
  background: #f5f5f5;
  color: #333;
  font-size: 11px;
}
.add-rows input {
  width: 78px;
  height: 29px;
  margin: 0 4px 0 6px;
  padding: 0 8px;
  border: 1px solid #d9d9d9;
  border-top-color: #c0c0c0;
  color: #444;
}
.add-rows label { line-height: 36px; }

.vscroll {
  display: flex;
  flex-direction: column;
  width: 12px;
  border-left: 1px solid #dadce0;
}
.v-head {
  height: 53px;
  background: #f8f9fa;
  border-bottom: 4px solid #dadce4;
}
.v-thumb {
  width: 9px;
  height: 26px;
  margin: auto 1px 1px;
  border-radius: 5px;
  background: #dadce0;
}
.arrow {
  display: flex;
  align-items: center;
  justify-content: center;
  height: 16px;
  border-top: 1px solid #dadce0;
  background: #f8f8f8;
}
.up, .down { border-width: 3px; }
.up { border-bottom-color: #888; border-top: 0; }
.down { border-top-color: #888; border-bottom: 0; }
.left, .right { border-width: 3px; }
.left { border-right-color: #888; border-left: 0; }
.right { border-left-color: #888; border-right: 0; }

.callout {
  position: absolute;
  left: 7px;
  bottom: 3px;
  display: flex;
  align-items: center;
  gap: 24px;
  width: 405px;
  height: 141px;
  padding: 20px 0 0 162px;
  border: 5px solid #ff7f27;
  border-radius: 28px;
  color: #ff7f27;
  font: 700 21px "Open Sans", "Noto Sans", sans-serif;
  pointer-events: none;
}

.hscroll {
  display: flex;
  height: 13px;
  border-top: 1px solid #d5d5d5;
}
.h-stub { width: 46px; background: #f8f8f8; border-right: 1px solid #dadce0; }
.h-track { flex: 1; padding: 1px; }
.h-thumb { width: 50%; height: 9px; border-radius: 5px; background: #dadce0; }
.h-arrow {
  display: flex;
  align-items: center;
  justify-content: center;
  width: 16px;
  border-left: 1px solid #dadce0;
  background: #f8f8f8;
}
.h-corner { width: 12px; border-left: 1px solid #dadce0; background: #f8f8f8; }

.tabs {
  display: flex;
  align-items: center;
  height: 38px;
  padding: 0 20px 0 51px;
  background: #f1f3f4;
  box-shadow: inset 0 1px #e3e5e7;
}
.tabs .bare + .bare { margin-left: 20px; }
.sheet-tab {
  display: flex;
  align-items: center;
  gap: 9px;
  height: 38px;
  margin-left: 24px;
  padding: 0 16px;
  border: 0;
  background: #fff;
  box-shadow: 0 0 3px rgba(60, 64, 67, .3);
  color: #188038;
  font-size: 14px;
  font-weight: 500;
}
.explore { margin-left: auto; }

.side {
  display: flex;
  flex-direction: column;
  align-items: center;
  gap: 36px;
  width: 52px;
  padding: 18px 0 22px 5px;
  border-left: 1px solid #dadce0;
}
.side hr {
  width: 20px;
  height: 1px;
  margin: -2px 0 2px;
  border: 0;
  background: #dadce0;
}
.side-hide { margin-top: auto; }
```
